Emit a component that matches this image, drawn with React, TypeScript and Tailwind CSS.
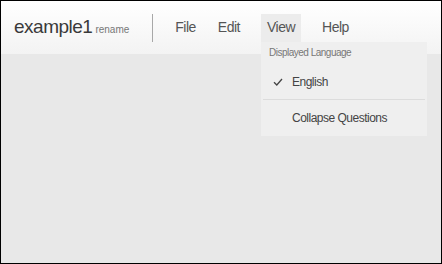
import React from 'react'

const font = { fontFamily: '"Liberation Sans", Arial, sans-serif' }

const menu = [
  { label: 'File', gap: 'ml-0' },
  { label: 'Edit', gap: 'ml-[10px]' },
  { label: 'View', gap: 'ml-[15px]' },
  { label: 'Help', gap: 'ml-[15px]' },
]

export default function App() {
  return (
    <div
      style={font}
      className="w-[442px] h-[264px] border border-black bg-[#e8e8e8] flex flex-col overflow-hidden"
    >
      <header className="h-[53px] shrink-0 flex items-center pl-[13px] bg-gradient-to-b from-white to-[#f3f3f3]">
        <div className="flex items-baseline">
          <span className="text-[19px] tracking-[-0.5px] text-[#3a3a3a]">example1</span>
          <span className="ml-[3px] text-[10px] text-[#777]">rename</span>
        </div>
        <div className="ml-[23px] w-px h-[28px] bg-[#a8a8a8]" />
        <nav className="ml-[16px] flex items-center">
          {menu.map(({ label, gap }) => (
            <div key={label} className={'relative ' + gap}>
              <div
                className={
                  'h-[28px] px-[6px] flex items-center text-[14px] tracking-[-0.5px] text-[#555] ' +
                  (label === 'View' ? 'bg-[#ececec]' : '')
                }
              >
                {label}
              </div>
              {label === 'View' && (
                <div className="absolute left-0 top-full w-[166px] h-[94px] bg-[#efefef] text-[#444]">
                  <div className="pl-[8px] pt-[5px] text-[10px] leading-[12px] tracking-[-0.5px] text-[#777]">
                    Displayed Language
                  </div>
                  <div className="h-[40px] pt-[6px] pl-[12px] flex items-center text-[12px] tracking-[-0.5px]">
                    <svg width="10" height="8" viewBox="0 0 10 8" className="mr-[9px]">
                      <path d="M1 4.2 L3.8 7 L9 1" fill="none" stroke="#444" strokeWidth="1.3" />
                    </svg>
                    English
                  </div>
                  <div className="mx-[2px] border-t border-[#dcdcdc]" />
                  <div className="h-[36px] pl-[31px] flex items-center text-[12px] tracking-[-0.5px]">
                    Collapse Questions
                  </div>
                </div>
              )}
            </div>
          ))}
        </nav>
      </header>
      <main className="flex-1" />
    </div>
  )
}
